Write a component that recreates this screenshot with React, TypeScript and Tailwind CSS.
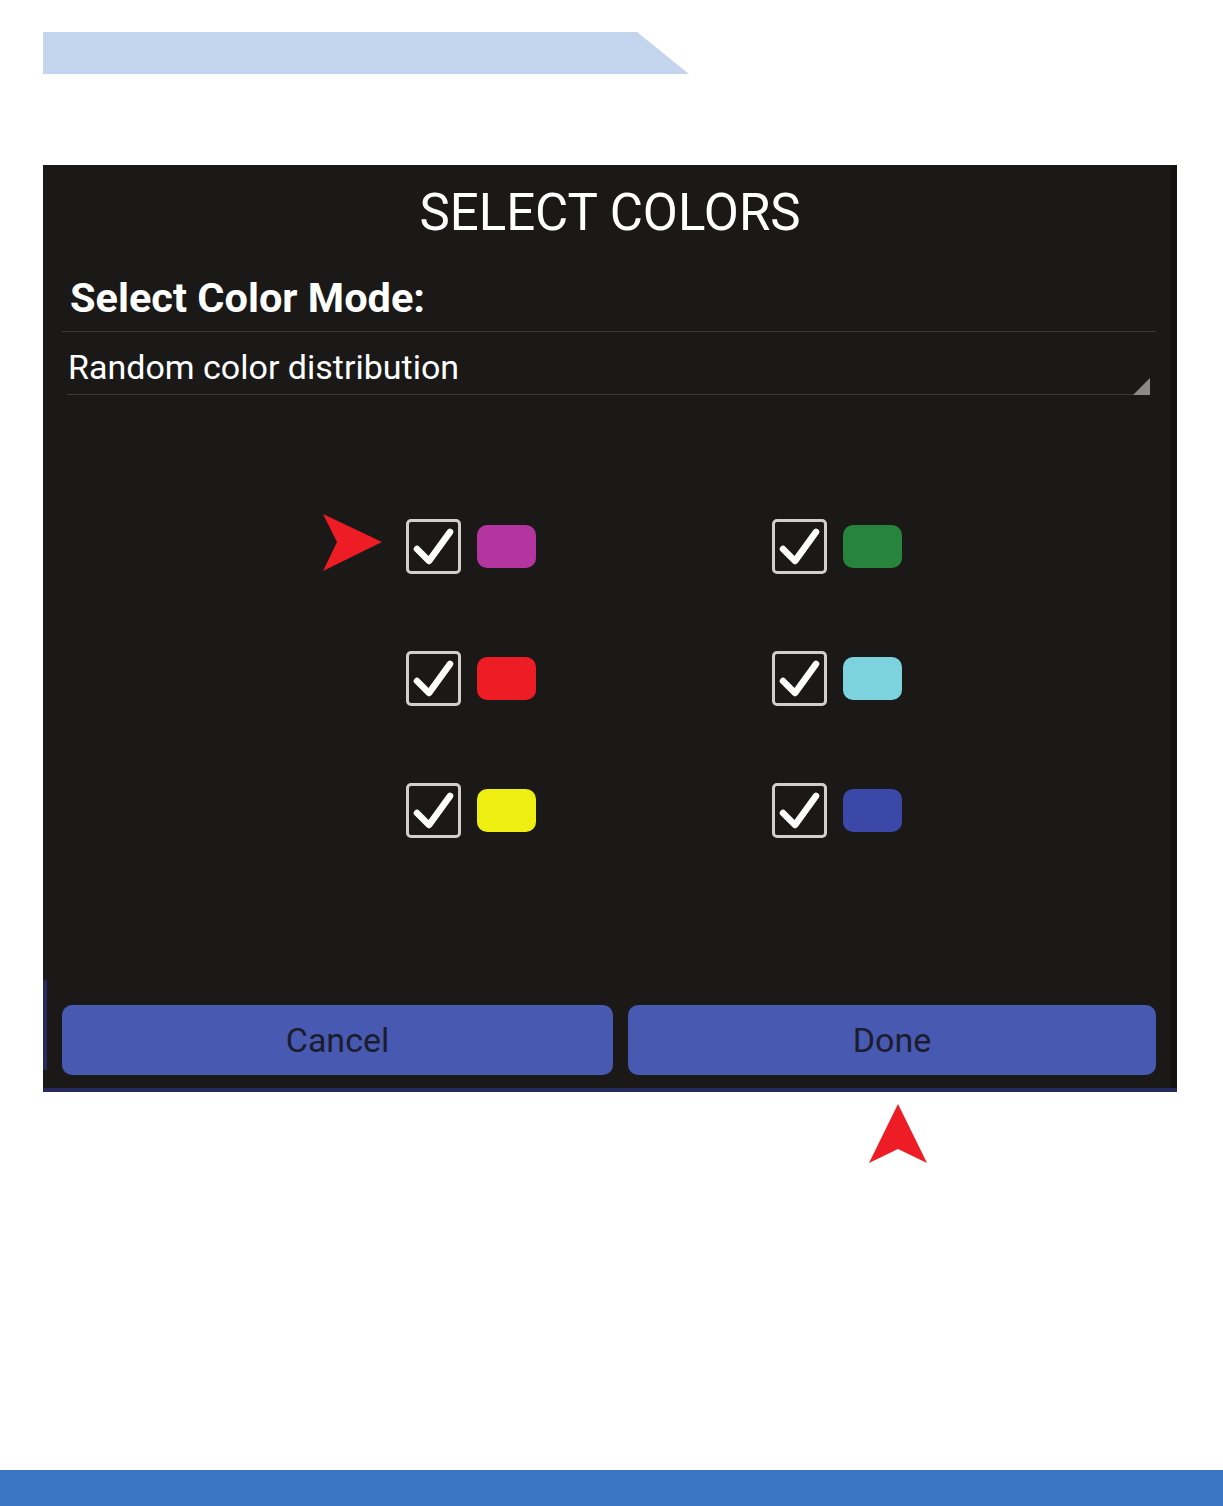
import React from "react";

const Check = () => (
  <div className="w-[55px] h-[55px] rounded-[5px] border-[3px] border-[#cfcfcf] flex items-center justify-center">
    <svg width="44" height="40" viewBox="0 0 44 40">
      <path d="M5 22 L17 34 L38 5" fill="none" stroke="#ffffff" strokeWidth="6.5" strokeLinecap="round" strokeLinejoin="round" />
    </svg>
  </div>
);

const Item = ({ color }: { color: string }) => (
  <div className="flex items-center gap-[16px]">
    <Check />
    <div className={`w-[59px] h-[43px] rounded-[10px] ${color}`} />
  </div>
);

export default function App() {
  return (
    <div className="relative w-[1223px] h-[1506px] bg-white overflow-hidden" style={{ fontFamily: "Roboto, 'Liberation Sans', sans-serif" }}>
      <div className="pt-[32px] pl-[43px]">
        <div className="w-[646px] h-[42px] bg-[#c3d5ec] [clip-path:polygon(0_0,594px_0,100%_100%,0_100%)]" />
      </div>

      <div className="mt-[91px] ml-[43px] w-[1134px] h-[927px] bg-[#1a1918] relative flex flex-col">
        <div className="absolute right-0 top-0 bottom-0 w-[6px] bg-[#121110]" />
        <div className="absolute left-0 right-0 bottom-0 h-[4px] bg-[#262a5a]" />
        <div className="absolute left-0 top-[815px] w-[4px] h-[90px] bg-[#262a5a]" />

        <div className="text-white text-center text-[51px] leading-none pt-[22px] h-[90px]">SELECT COLORS</div>

        <div className="px-[19px]">
          <div className="text-white font-bold text-[41.5px] leading-none pl-[8px] pt-[22px] h-[76px]">Select Color Mode:</div>
          <div className="h-[1px] bg-[#3a3a3a] w-[1094px]" />
        </div>

        <div className="px-[24px] relative">
          <div className="text-white text-[34px] leading-none pt-[18px] pl-[1px] h-[62px]">Random color distribution</div>
          <div className="h-[1px] bg-[#3a3a3a] w-[1083px]" />
          <svg className="absolute right-[27px] bottom-[0px]" width="17" height="17" viewBox="0 0 17 17">
            <polygon points="17,0 17,17 0,17" fill="#8a8a8a" />
          </svg>
        </div>

        <div className="relative mt-[124px] ml-[363px] grid grid-cols-[366px_auto] gap-y-[77px]">
          <svg className="absolute left-[-83px] top-[-5px]" width="60" height="58" viewBox="0 0 60 58">
            <polygon points="0,0 59,28 0,57 14,28" fill="#ee1c24" />
          </svg>
          <Item color="bg-[#b535a0]" />
          <Item color="bg-[#26843c]" />
          <Item color="bg-[#ee1c24]" />
          <Item color="bg-[#7dd3dd]" />
          <Item color="bg-[#eeee10]" />
          <Item color="bg-[#3b48a8]" />
        </div>

        <div className="mt-auto mb-[17px] px-[19px] flex gap-[15px]">
          <div className="w-[551px] h-[70px] rounded-[10px] bg-[#4759b0] flex items-center justify-center text-[34px] text-[#1b1c2e]">Cancel</div>
          <div className="w-[528px] h-[70px] rounded-[10px] bg-[#4759b0] flex items-center justify-center text-[34px] text-[#1b1c2e]">Done</div>
        </div>
      </div>

      <div className="ml-[869px] mt-[12px]">
        <svg width="58" height="59" viewBox="0 0 58 59">
          <polygon points="29,0 58,59 29,45 0,59" fill="#ee1c24" />
        </svg>
      </div>

      <div className="absolute left-0 right-0 bottom-0 h-[36px] bg-[#3b75c3]" />
    </div>
  );
}
